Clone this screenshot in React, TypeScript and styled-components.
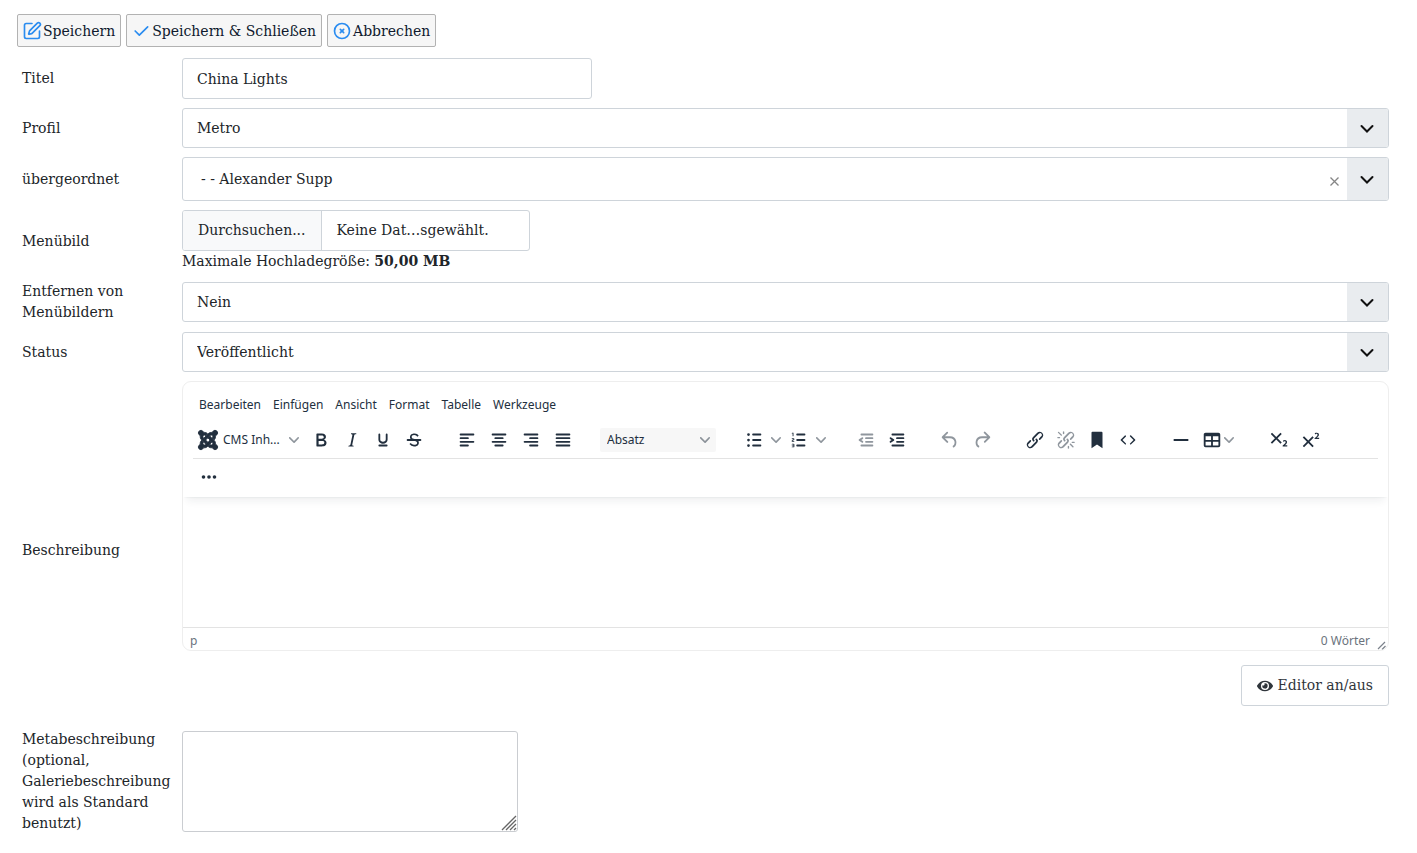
import React, { useState } from 'react';
import styled, { createGlobalStyle } from 'styled-components';
import { SquarePen } from 'lucide-react';
import { FaEye, FaJoomla } from 'react-icons/fa';
import { TbCheck, TbCircleX } from 'react-icons/tb';

const serif = '"DejaVu Serif", serif';
const sans = '"Noto Sans", sans-serif';
const ink = '#212529';
const line = '#ced4da';
const editorInk = '#222f3e';

const GlobalStyle = createGlobalStyle`
  *, *::before, *::after { box-sizing: border-box; }
  body {
    margin: 0;
    background: #fff;
    color: ${ink};
    font: 14px/21px ${serif};
  }
  button, input, select, textarea { font: inherit; color: inherit; }
`;

const Page = styled.form`
  padding: 14px 28px 20px 17px;
`;

const Actions = styled.div`
  display: flex;
  gap: 5px;
  margin-bottom: 11px;
`;

const ActionButton = styled.button`
  display: flex;
  align-items: center;
  gap: 1px;
  height: 33px;
  padding: 1px 5px 0 4px;
  border: 1px solid #b2b2b2;
  border-radius: 2px;
  background: #f6f6f6;
  color: #0f1a2e;
  svg { color: #2a8cf0; }
`;

const Fields = styled.div`
  display: flex;
  flex-direction: column;
  gap: 9px;
`;

const Row = styled.div`
  display: grid;
  grid-template-columns: 165px minmax(0, 1fr);
  align-items: center;
`;

const Label = styled.label`
  padding-left: 5px;
`;

const TextInput = styled.input`
  display: block;
  width: 410px;
  height: 41px;
  padding: 0 14px;
  border: 1px solid ${line};
  border-radius: 3px;
  background: #fff;
`;

const SelectBox = styled.div<{ $tall?: boolean }>`
  position: relative;
  display: grid;
  grid-template-columns: minmax(0, 1fr) 41px;
  height: ${(p) => (p.$tall ? 44 : 40)}px;
  border: 1px solid ${line};
  border-radius: 3px;
  overflow: hidden;
`;

const Select = styled.select<{ $indent?: boolean }>`
  grid-area: 1 / 1 / 2 / 3;
  appearance: none;
  width: 100%;
  height: 100%;
  padding: 0 56px 0 ${(p) => (p.$indent ? 18 : 14)}px;
  border: 0;
  background: transparent;
`;

const Arrow = styled.span`
  grid-area: 1 / 2 / 2 / 3;
  display: flex;
  align-items: center;
  justify-content: center;
  padding-right: 2px;
  background: #e9ecef;
  pointer-events: none;
`;

const ClearButton = styled.button`
  position: absolute;
  right: 45px;
  top: 15px;
  display: flex;
  padding: 4px;
  border: 0;
  background: none;
  color: #858585;
`;

const FilePicker = styled.label`
  display: flex;
  width: 348px;
  height: 41px;
  border: 1px solid ${line};
  border-radius: 3px;
  overflow: hidden;
  line-height: 39px;
`;

const FileInput = styled.input`
  position: absolute;
  width: 1px;
  height: 1px;
  opacity: 0;
`;

const FileButton = styled.span`
  padding: 0 15px;
  border-right: 1px solid ${line};
  background: #f8f9fa;
`;

const FileName = styled.span`
  padding: 0 15px;
`;

const Editor = styled.section`
  border: 1px solid #eee;
  border-radius: 9px;
  color: ${editorInk};
  font: 12px/18px ${sans};
  overflow: hidden;
`;

const EditorHeader = styled.header`
  position: relative;
  padding: 10px 10px 3px;
  box-shadow: 0 2px 2px -2px rgba(34, 47, 62, 0.1), 0 8px 8px -4px rgba(34, 47, 62, 0.07);
`;

const MenuBar = styled.nav`
  display: flex;
  height: 28px;
  margin-bottom: 1px;
`;

const MenuButton = styled.button`
  padding: 0 6px 2px;
  border: 0;
  background: none;
`;

const ToolRow = styled.div<{ $ruled?: boolean }>`
  display: flex;
  align-items: center;
  gap: 22px;
  height: ${(p) => (p.$ruled ? 38 : 35)}px;
  border-bottom: ${(p) => (p.$ruled ? '1px solid #e3e3e3' : '0')};
`;

const ToolGroup = styled.div<{ $loose?: boolean }>`
  display: flex;
  align-items: center;
  gap: ${(p) => (p.$loose ? 1 : 0)}px;
`;

const ToolButton = styled.button<{ $split?: boolean; $tight?: boolean }>`
  display: flex;
  align-items: center;
  justify-content: ${(p) => (p.$split ? 'space-between' : 'center')};
  width: ${(p) => (p.$split ? 45 : 31)}px;
  height: 26px;
  padding: ${(p) => (p.$tight ? '0 7px 0 5px' : p.$split ? '0 2px 0 5px' : '0')};
  border: 0;
  background: none;
  &:disabled { color: ${editorInk}; opacity: 0.5; }
`;

const CmsButton = styled.button`
  display: flex;
  align-items: center;
  width: 112px;
  height: 26px;
  padding: 0 6px 0 4px;
  border: 0;
  background: none;
  span { margin: 0 auto 0 4px; }
`;

const BlockSelect = styled.div`
  position: relative;
  display: flex;
  align-items: center;
  select {
    appearance: none;
    width: 116px;
    height: 24px;
    padding: 0 24px 0 7px;
    border: 0;
    border-radius: 2px;
    background: #f7f7f7;
  }
  svg { position: absolute; right: 6px; pointer-events: none; }
`;

const EditArea = styled.div`
  height: 130px;
  outline: 0;
`;

const StatusBar = styled.footer`
  display: flex;
  justify-content: space-between;
  align-items: center;
  height: 23px;
  padding: 3px 2px 0 7px;
  border-top: 1px solid #e3e3e3;
  color: #6b737d;
`;

const WordCount = styled.span`
  display: flex;
  align-items: flex-end;
  gap: 7px;
`;

const ToggleRow = styled.div`
  display: flex;
  justify-content: flex-end;
  margin: 14px 0;
`;

const ToggleButton = styled.button`
  display: flex;
  align-items: center;
  gap: 5px;
  height: 41px;
  padding: 0 15px;
  border: 1px solid ${line};
  border-radius: 3px;
  background: #fff;
  color: #2f353b;
`;

const MetaText = styled.textarea`
  display: block;
  width: 336px;
  height: 101px;
  padding: 8px 14px;
  border: 1px solid #cacdd1;
  border-radius: 3px;
  background: transparent;
  resize: none;
`;

const MetaBox = styled.div`
  position: relative;
  width: 336px;
  svg { position: absolute; right: 1px; bottom: 1px; pointer-events: none; }
`;

const LINK =
  'M6.2 12.3a1 1 0 0 1 1.4 1.4l-2 2a2 2 0 1 0 2.6 2.8l4.8-4.8a1 1 0 0 0 0-1.4 1 1 0 1 1 1.4-1.3 2.9 2.9 0 0 1 0 4L9.6 20a3.9 3.9 0 0 1-5.5-5.5l2-2Zm11.6-.6a1 1 0 0 1-1.4-1.4l2-2a2 2 0 1 0-2.6-2.8L11 10.3a1 1 0 0 0 0 1.4A1 1 0 1 1 9.6 13a2.9 2.9 0 0 1 0-4L14.4 4a3.9 3.9 0 0 1 5.5 5.5l-2 2Z';

const INDENT_BARS =
  'M7 5h12c.6 0 1 .4 1 1s-.4 1-1 1H7a1 1 0 1 1 0-2Zm5 4h7c.6 0 1 .4 1 1s-.4 1-1 1h-7a1 1 0 0 1 0-2Zm0 4h7c.6 0 1 .4 1 1s-.4 1-1 1h-7a1 1 0 0 1 0-2Zm-5 4h12c.6 0 1 .4 1 1s-.4 1-1 1H7a1 1 0 0 1 0-2Z';

const icons: Record<string, string> = {
  bold: 'M7.8 19c-.3 0-.5 0-.6-.2l-.2-.5V5.7c0-.2 0-.4.2-.5l.6-.2h5c1.5 0 2.7.3 3.5 1 .7.6 1.1 1.4 1.1 2.5a3 3 0 0 1-.6 1.9c-.4.6-1 1-1.6 1.2.4.1.9.3 1.3.6s.8.7 1 1.2c.4.4.5 1 .5 1.6 0 1.3-.4 2.3-1.3 3-.8.7-2.1 1-3.8 1H7.8Zm5-8.3c.6 0 1.2-.1 1.6-.5.4-.3.6-.7.6-1.3 0-1.1-.8-1.7-2.3-1.7H9.3v3.5h3.4Zm.5 6c.7 0 1.3-.1 1.7-.4.4-.4.6-.9.6-1.5s-.2-1-.7-1.4c-.4-.3-1-.4-2-.4H9.4v3.8h4Z',
  italic: 'm16.7 4.7-.1.9h-.3c-.6 0-1 0-1.4.3-.3.3-.4.6-.5 1.1l-2.1 9.8v.6c0 .5.4.8 1.4.8h.2l-.2.8H8l.2-.8h.2c1.1 0 1.8-.5 2-1.5l2-9.8.1-.5c0-.6-.4-.8-1.4-.8h-.3l.2-.9h5.8Z',
  underline: 'M16 5c.6 0 1 .4 1 1v5.5a4 4 0 0 1-.4 1.8l-1 1.4a5.3 5.3 0 0 1-5.5 1 5 5 0 0 1-1.6-1c-.5-.4-.8-.9-1.1-1.4a4 4 0 0 1-.4-1.8V6c0-.6.4-1 1-1s1 .4 1 1v5.5c0 .3 0 .6.2 1l.6.7a3.3 3.3 0 0 0 2.2.8 3.4 3.4 0 0 0 2.2-.8c.3-.2.4-.5.6-.8l.2-.9V6c0-.6.4-1 1-1ZM8 17h8c.6 0 1 .4 1 1s-.4 1-1 1H8a1 1 0 0 1 0-2Z',
  strike: 'M15.6 8.5c-.5-.7-1-1.1-1.3-1.3-.6-.4-1.3-.6-2-.6-2.7 0-2.8 1.7-2.8 2.1 0 1.6 1.8 2 3.2 2.3 4.4.9 4.6 2.8 4.6 3.9 0 1.4-.7 4.1-5 4.1A6.2 6.2 0 0 1 7 16.4l1.5-1.1c.4.6 1.6 2 3.7 2 1.6 0 2.5-.4 3-1.2.4-.8.3-2-.8-2.6-.7-.4-1.6-.7-2.9-1-1-.2-3.9-.8-3.9-3.6C7.6 6 10.3 5 12.4 5c2.9 0 4.2 1.6 4.7 2.4l-1.5 1.1Z',
  strikeBar: 'M5 11h14a1 1 0 0 1 0 2H5a1 1 0 0 1 0-2Z',
  alignLeft: 'M5 5h14a1 1 0 0 1 0 2H5a1 1 0 1 1 0-2Zm0 4h8a1 1 0 0 1 0 2H5a1 1 0 1 1 0-2Zm0 8h8a1 1 0 0 1 0 2H5a1 1 0 0 1 0-2Zm0-4h14a1 1 0 0 1 0 2H5a1 1 0 0 1 0-2Z',
  alignCenter: 'M5 5h14a1 1 0 0 1 0 2H5a1 1 0 1 1 0-2Zm3 4h8a1 1 0 0 1 0 2H8a1 1 0 1 1 0-2Zm0 8h8a1 1 0 0 1 0 2H8a1 1 0 0 1 0-2Zm-3-4h14a1 1 0 0 1 0 2H5a1 1 0 0 1 0-2Z',
  alignRight: 'M5 5h14a1 1 0 0 1 0 2H5a1 1 0 1 1 0-2Zm6 4h8a1 1 0 0 1 0 2h-8a1 1 0 0 1 0-2Zm0 8h8a1 1 0 0 1 0 2h-8a1 1 0 0 1 0-2Zm-6-4h14a1 1 0 0 1 0 2H5a1 1 0 0 1 0-2Z',
  alignJustify: 'M5 5h14a1 1 0 0 1 0 2H5a1 1 0 1 1 0-2Zm0 4h14a1 1 0 0 1 0 2H5a1 1 0 1 1 0-2Zm0 4h14a1 1 0 0 1 0 2H5a1 1 0 0 1 0-2Zm0 4h14a1 1 0 0 1 0 2H5a1 1 0 0 1 0-2Z',
  bullets: 'M11 5h8a1 1 0 0 1 0 2h-8a1 1 0 0 1 0-2Zm0 6h8a1 1 0 0 1 0 2h-8a1 1 0 0 1 0-2Zm0 6h8a1 1 0 0 1 0 2h-8a1 1 0 0 1 0-2ZM4.500 6a1.500 1.500 0 1 0 3 0 1.500 1.500 0 1 0-3 0Zm0 6a1.500 1.500 0 1 0 3 0 1.500 1.500 0 1 0-3 0Zm0 6a1.500 1.500 0 1 0 3 0 1.500 1.500 0 1 0-3 0Z',
  numbers: 'M10 17h8a1 1 0 0 1 0 2h-8a1 1 0 0 1 0-2Zm0-6h8a1 1 0 0 1 0 2h-8a1 1 0 0 1 0-2Zm0-6h8a1 1 0 0 1 0 2h-8a1 1 0 1 1 0-2ZM6 4v3.500c0 .3-.2.5-.5.5a.5.5 0 0 1-.5-.5V5h-.5a.5.5 0 0 1 0-1H6Zm-1 8.800.2.2h1.300c.3 0 .5.2.5.5s-.2.5-.5.5H4.900a1 1 0 0 1-.9-1V13c0-.4.3-.8.6-1l1.200-.4.2-.3a.2.2 0 0 0-.2-.2H4.500a.5.5 0 0 1-.5-.5c0-.3.2-.5.5-.5h1.600c.5 0 .9.4.9 1v.1c0 .4-.3.8-.6 1l-1.200.4-.2.3ZM7 17v2c0 .6-.4 1-1 1H4.500a.5.5 0 0 1 0-1h1.200c.2 0 .3-.1.3-.3 0-.2-.1-.3-.3-.3H4.400a.4.4 0 1 1 0-.8h1.300c.2 0 .3-.1.3-.3 0-.2-.1-.3-.3-.3H4.500a.5.5 0 1 1 0-1H6c.6 0 1 .4 1 1Z',
  outdent: INDENT_BARS + 'm1.6-3.8a1 1 0 0 1-1.2 1.6l-3-2a1 1 0 0 1 0-1.6l3-2a1 1 0 0 1 1.2 1.6L6.800 12l1.800 1.2Z',
  indent: INDENT_BARS + 'm-2.6-3.8L6.200 12l-1.800-1.2a1 1 0 0 1 1.2-1.6l3 2a1 1 0 0 1 0 1.6l-3 2a1 1 0 1 1-1.2-1.6Z',
  undo: 'M6.400 8H12c3.7 0 6.200 2 6.800 5.100.6 2.700-.4 5.600-2.300 6.800a1 1 0 0 1-1-1.800c1.100-.6 1.800-2.700 1.400-4.600-.5-2.100-2.100-3.500-4.900-3.500H6.400l3.300 3.300a1 1 0 1 1-1.400 1.400l-5-5a1 1 0 0 1 0-1.400l5-5a1 1 0 0 1 1.400 1.400L6.400 8Z',
  redo: 'M17.6 10H12c-2.8 0-4.400 1.400-4.900 3.500-.4 2 .3 4 1.400 4.600a1 1 0 1 1-1 1.800c-2-1.200-2.900-4.100-2.300-6.800.6-3 3-5.100 6.800-5.100h5.600l-3.300-3.300a1 1 0 1 1 1.400-1.400l5 5a1 1 0 0 1 0 1.400l-5 5a1 1 0 0 1-1.400-1.400l3.300-3.300Z',
  link: LINK,
  unlink: LINK + 'M7.600 6.300a.8.8 0 0 1-1 1.100L3.300 4.200a.7.7 0 1 1 1-1l3.200 3.100ZM5.100 8.600a.8.8 0 0 1 0 1.500H3a.8.8 0 0 1 0-1.500H5Zm5-3.500a.8.8 0 0 1-1.500 0V3a.8.8 0 0 1 1.500 0V5Zm6 11.800a.8.8 0 0 1 1-1l3.200 3.200a.8.8 0 0 1-1 1L16 17Zm-2.200 2a.8.8 0 0 1 1.500 0V21a.8.8 0 0 1-1.500 0V19Zm5-3.500a.7.7 0 1 1 0-1.500H21a.8.8 0 0 1 0 1.500H19Z',
  bookmark: 'M6 4v17l6-4 6 4V4c0-.6-.4-1-1-1H7a1 1 0 0 0-1 1Z',
  code: 'M9.800 15.700c.3.3.3.8 0 1-.3.4-.9.4-1.200 0l-4.400-4.100a.8.8 0 0 1 0-1.200l4.400-4.200c.3-.3.9-.3 1.200 0 .3.3.3.8 0 1.100L6 12l3.800 3.700ZM14.200 15.700c-.3.3-.3.8 0 1 .4.4.9.4 1.200 0l4.400-4.100c.3-.3.3-.9 0-1.200l-4.400-4.200a.8.8 0 0 0-1.200 0c-.3.3-.3.8 0 1.100L18 12l-3.800 3.700Z',
  rule: 'M4 11h16v2H4z',
  table: 'M19 4a2 2 0 0 1 2 2v12a2 2 0 0 1-2 2H5a2 2 0 0 1-2-2V6c0-1.100.9-2 2-2h14ZM5 14v4h6v-4H5Zm14 0h-6v4h6v-4Zm0-6h-6v4h6V8ZM5 12h6V8H5v4Z',
  subscript: 'm10.400 10 4.600 4.600-1.400 1.400L9 11.400 4.400 16 3 14.600 7.600 10 3 5.400 4.400 4 9 8.600 13.600 4 15 5.400 10.400 10ZM21 19h-5v-1l1-.8 1.700-1.600c.3-.4.5-.8.5-1.200 0-.3 0-.6-.2-.7-.2-.2-.5-.3-.9-.3a2 2 0 0 0-.8.2l-.7.3-.4-1.100 1-.6 1.200-.2c.8 0 1.400.3 1.800.7.4.4.6.9.6 1.500s-.2 1.100-.5 1.600a8 8 0 0 1-1.300 1.300l-.6.6h2.600V19Z',
  superscript: 'M15 9.400 10.400 14l4.600 4.600-1.400 1.400L9 15.400 4.400 20 3 18.600 7.600 14 3 9.400 4.400 8 9 12.600 13.600 8 15 9.400Zm5.900 1.600h-5v-1l1-.8 1.700-1.600c.3-.5.5-.9.5-1.300 0-.3 0-.5-.2-.7-.2-.2-.5-.3-.9-.3l-.8.2-.7.4-.4-1.200c.2-.2.5-.4 1-.5.3-.2.8-.2 1.200-.2.8 0 1.400.2 1.800.6.4.4.6 1 .6 1.600 0 .5-.2 1-.5 1.500l-1.300 1.400-.6.5h2.600V11Z',
  more: 'M4 12a2 2 0 1 0 4 0 2 2 0 1 0-4 0Zm6 0a2 2 0 1 0 4 0 2 2 0 1 0-4 0Zm6 0a2 2 0 1 0 4 0 2 2 0 1 0-4 0Z',
};

const Icon = ({ name }: { name: string }) => (
  <svg width="22" height="22" viewBox="0 0 24 24" fill="currentColor" fillRule="evenodd" aria-hidden="true">
    <path d={icons[name]} />
    {name === 'strike' && <path d={icons.strikeBar} />}
  </svg>
);

const Chevron = () => (
  <svg width="10" height="10" viewBox="0 0 10 10" fill={editorInk} opacity="0.5" aria-hidden="true">
    <path d="M8.700 2.200c.3-.3.8-.3 1 0 .4.4.4.9 0 1.200L5.700 7.800c-.3.3-.9.3-1.200 0L.2 3.400a.8.8 0 0 1 0-1.200c.3-.3.8-.3 1.100 0L5 6l3.700-3.800Z" />
  </svg>
);

type Tool = { icon: string; label: string; off?: boolean; split?: boolean; tight?: boolean };

const Tools = ({ items, loose }: { items: Tool[]; loose?: boolean }) => (
  <ToolGroup $loose={loose}>
    {items.map((t) => (
      <ToolButton key={t.icon} type="button" aria-label={t.label} disabled={t.off} $split={t.split} $tight={t.tight}>
        <Icon name={t.icon} />
        {t.split && <Chevron />}
      </ToolButton>
    ))}
  </ToolGroup>
);

type DropdownProps = { id: string; options: string[]; tall?: boolean; onClear?: () => void };

const Dropdown = ({ id, options, tall, onClear }: DropdownProps) => (
  <SelectBox $tall={tall}>
    <Arrow>
      <svg width="14" height="14" viewBox="0 0 14 14" fill="none" stroke="#111" strokeWidth="2" strokeLinecap="round" aria-hidden="true">
        <path d="M1.500 5L7 10.500 12.500 5" />
      </svg>
    </Arrow>
    <Select id={id} $indent={tall}>
      {options.map((o) => (
        <option key={o}>{o}</option>
      ))}
    </Select>
    {onClear && (
      <ClearButton type="button" aria-label="Auswahl entfernen" onClick={onClear}>
        <svg width="9" height="9" viewBox="0 0 9 9" fill="none" stroke="currentColor" strokeWidth="1.3" aria-hidden="true">
          <path d="M.5.5l8 8M8.500.5l-8 8" />
        </svg>
      </ClearButton>
    )}
  </SelectBox>
);

const menus = ['Bearbeiten', 'Einfügen', 'Ansicht', 'Format', 'Tabelle', 'Werkzeuge'];

const DescriptionEditor = () => (
  <Editor aria-labelledby="beschreibung">
    <EditorHeader>
      <MenuBar>
        {menus.map((m) => (
          <MenuButton key={m} type="button">{m}</MenuButton>
        ))}
      </MenuBar>
      <ToolRow $ruled>
        <ToolGroup>
          <CmsButton type="button">
            <FaJoomla size={22} stroke="currentColor" strokeWidth={22} />
            <span>CMS Inh...</span>
            <Chevron />
          </CmsButton>
          <Tools
            items={[
              { icon: 'bold', label: 'Fett' },
              { icon: 'italic', label: 'Kursiv' },
              { icon: 'underline', label: 'Unterstrichen' },
              { icon: 'strike', label: 'Durchgestrichen' },
            ]}
          />
        </ToolGroup>
        <Tools
          loose
          items={[
            { icon: 'alignLeft', label: 'Linksbündig' },
            { icon: 'alignCenter', label: 'Zentriert' },
            { icon: 'alignRight', label: 'Rechtsbündig' },
            { icon: 'alignJustify', label: 'Blocksatz' },
          ]}
        />
        <BlockSelect>
          <select aria-label="Absatzformat">
            <option>Absatz</option>
          </select>
          <Chevron />
        </BlockSelect>
        <Tools
          items={[
            { icon: 'bullets', label: 'Aufzählung', split: true },
            { icon: 'numbers', label: 'Nummerierte Liste', split: true },
          ]}
        />
        <Tools
          items={[
            { icon: 'outdent', label: 'Einzug verkleinern', off: true },
            { icon: 'indent', label: 'Einzug vergrößern' },
          ]}
        />
        <Tools
          loose
          items={[
            { icon: 'undo', label: 'Rückgängig', off: true },
            { icon: 'redo', label: 'Wiederholen', off: true },
          ]}
        />
        <Tools
          items={[
            { icon: 'link', label: 'Link' },
            { icon: 'unlink', label: 'Link entfernen', off: true },
            { icon: 'bookmark', label: 'Textmarke' },
            { icon: 'code', label: 'Quellcode' },
          ]}
        />
        <Tools
          items={[
            { icon: 'rule', label: 'Horizontale Linie' },
            { icon: 'table', label: 'Tabelle', split: true, tight: true },
          ]}
        />
        <Tools
          loose
          items={[
            { icon: 'subscript', label: 'Tiefgestellt' },
            { icon: 'superscript', label: 'Hochgestellt' },
          ]}
        />
      </ToolRow>
      <ToolRow>
        <Tools items={[{ icon: 'more', label: 'Mehr' }]} />
      </ToolRow>
    </EditorHeader>
    <EditArea contentEditable suppressContentEditableWarning role="textbox" aria-labelledby="beschreibung" />
    <StatusBar>
      <span>p</span>
      <WordCount>
        0 Wörter
        <svg width="9" height="9" viewBox="0 0 9 9" fill="none" stroke="#7b828b" strokeWidth="1.2" aria-hidden="true">
          <path d="M1 8L8 1M5 8.500L8.500 5" />
        </svg>
      </WordCount>
    </StatusBar>
  </Editor>
);

export default function App() {
  const [parents, setParents] = useState(['- - Alexander Supp']);

  return (
    <>
      <GlobalStyle />
      <Page onSubmit={(e) => e.preventDefault()}>
        <Actions>
          <ActionButton type="submit"><SquarePen size={20} />Speichern</ActionButton>
          <ActionButton type="submit"><TbCheck size={20} />Speichern &amp; Schließen</ActionButton>
          <ActionButton type="button"><TbCircleX size={20} />Abbrechen</ActionButton>
        </Actions>
        <Fields>
          <Row>
            <Label htmlFor="titel">Titel</Label>
            <TextInput id="titel" defaultValue="China Lights" />
          </Row>
          <Row>
            <Label htmlFor="profil">Profil</Label>
            <Dropdown id="profil" options={['Metro']} />
          </Row>
          <Row>
            <Label htmlFor="parent">übergeordnet</Label>
            <Dropdown id="parent" options={parents} tall onClear={() => setParents([''])} />
          </Row>
          <Row>
            <Label htmlFor="bild">Menübild</Label>
            <div>
              <FilePicker>
                <FileInput id="bild" type="file" />
                <FileButton>Durchsuchen...</FileButton>
                <FileName>Keine Dat…sgewählt.</FileName>
              </FilePicker>
              Maximale Hochladegröße: <strong>50,00 MB</strong>
            </div>
          </Row>
          <Row>
            <Label htmlFor="entfernen">Entfernen von Menübildern</Label>
            <Dropdown id="entfernen" options={['Nein', 'Ja']} />
          </Row>
          <Row>
            <Label htmlFor="status">Status</Label>
            <Dropdown id="status" options={['Veröffentlicht', 'Versteckt']} />
          </Row>
          <Row>
            <Label as="span" id="beschreibung">Beschreibung</Label>
            <div>
              <DescriptionEditor />
              <ToggleRow>
                <ToggleButton type="button"><FaEye size={16} />Editor an/aus</ToggleButton>
              </ToggleRow>
            </div>
          </Row>
          <Row>
            <Label htmlFor="meta">Metabeschreibung (optional, Galeriebeschreibung wird als Standard benutzt)</Label>
            <MetaBox>
              <MetaText id="meta" />
              <svg width="16" height="16" viewBox="0 0 16 16" fill="none" stroke="#666" strokeWidth="1.3" aria-hidden="true">
                <path d="M1 15L15 1M5 15L15 5M9 15l6-6M13 15l2-2" />
              </svg>
            </MetaBox>
          </Row>
        </Fields>
      </Page>
    </>
  );
}
